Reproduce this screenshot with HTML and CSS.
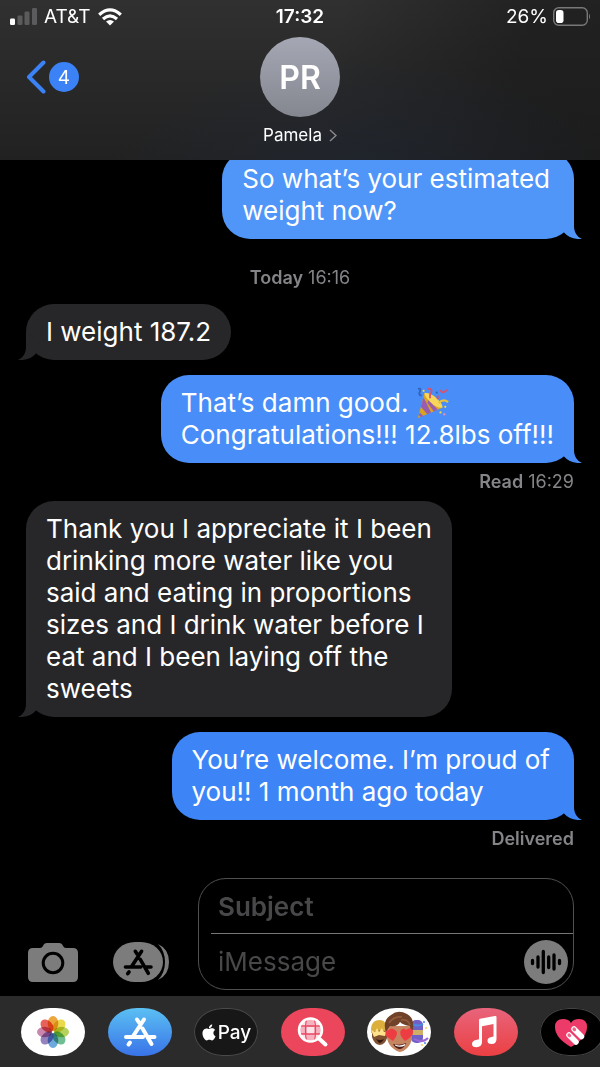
FILE: index.html
```html
<!DOCTYPE html>
<html lang="en">
<head>
<meta charset="utf-8">
<meta name="viewport" content="width=device-width, initial-scale=1">
<title>Pamela</title>
<link rel="stylesheet" href="styles.css">
</head>
<body>
<svg class="defs" aria-hidden="true">
  <symbol id="tail" viewBox="0 0 30 30"><path fill="currentColor" d="M22 2V17C22 23 25 28 30 30C22 30.6 16 28 12 23.5L10 10Z"/></symbol>
  <symbol id="store" viewBox="0 0 64 48"><path d="M36 11.500L24.500 29M29 11.500L31 14.500M34.500 20.500L43.500 36M18 29H35M41.500 29H46.500M22 34.500L20.500 36.500" fill="none" stroke="currentColor" stroke-width="4" stroke-linecap="round"/></symbol>
</svg>

<header class="header">
  <div class="status">
    <div class="status-left">
      <svg width="27" height="17" viewBox="0 0 27 17" aria-hidden="true"><rect x="0" y="10.500" width="5" height="6.500" rx="1.300" fill="#fff"/><g fill="#5b5b5d"><rect x="7.500" y="7.500" width="5" height="9.500" rx="1.300"/><rect x="14.500" y="3.500" width="5" height="13.500" rx="1.300"/><rect x="22" y="0" width="5" height="17" rx="1.300"/></g></svg>
      <span>AT&amp;T</span>
      <svg width="24" height="18" viewBox="0 0 24 18" fill="none" stroke="#fff" stroke-width="3.200" aria-hidden="true"><path d="M1.200 6.800Q12 -3 22.800 6.800M5 11Q12 4.700 19 11"/><path d="M12 17.500L8 13.500Q12 10.300 16 13.500Z" fill="#fff" stroke="none"/></svg>
    </div>
    <time class="clock">17:32</time>
    <div class="status-right">
      <span>26%</span>
      <svg width="38" height="19" viewBox="0 0 38 19" aria-hidden="true"><rect x=".7" y=".7" width="33.600" height="17.600" rx="5" fill="none" stroke="#78787a" stroke-width="1.400"/><rect x="3" y="3" width="7.500" height="13" rx="2.800" fill="#fff"/><path d="M36 6.500Q38 9.500 36 12.500Z" fill="#78787a"/></svg>
    </div>
  </div>
  <div class="nav">
    <button class="back" type="button" aria-label="Back, 4 unread">
      <svg width="20" height="34" viewBox="0 0 20 34" aria-hidden="true"><path d="M17.500 2.500L3 17L17.500 31.500" fill="none" stroke="#3b82f6" stroke-width="4" stroke-linecap="round" stroke-linejoin="round"/></svg>
      <span class="badge">4</span>
    </button>
    <button class="contact" type="button">
      <span class="avatar">PR</span>
      <span class="name">Pamela
        <svg width="8" height="13" viewBox="0 0 8 13" aria-hidden="true"><path d="M1 1L7 6.500L1 12" fill="none" stroke="#8a8a8e" stroke-width="1.500"/></svg>
      </span>
    </button>
  </div>
</header>

<main class="thread">
  <p class="bubble sent sent-high">So what’s your estimated<br>weight now?<svg class="bubble-tail"><use href="#tail"/></svg></p>
  <p class="day"><b>Today</b> 16:16</p>
  <p class="bubble received">I weight 187.2<svg class="bubble-tail"><use href="#tail"/></svg></p>
  <p class="bubble sent sent-mid">That’s damn good.
    <svg class="popper" viewBox="0 0 34 34" role="img" aria-label="Party popper"><path d="M8 6L27 22L1 33Z" fill="#d9a521"/><path d="M8 6Q16 6 22 13Q28 19 27 22Q21 23 14 16Q8 10 8 6Z" fill="#f6d65c"/><path d="M7 11L15 27L11 29L4 21ZM12 14L22 24L18 26L11 17ZM3 27L7 31L4 32L2 30Z" fill="#9a5cae"/><path d="M11 2Q17 1 15 6Q13 9 14 12M25 3Q26 7 29 5T33 3M22 9V13" fill="none" stroke="#dd506c" stroke-width="2"/><path d="M1 2Q5 1 3 5T5 9" fill="none" stroke="#3162be" stroke-width="2"/><path d="M23 17Q28 12 33 16" fill="none" stroke="#eac23b" stroke-width="2.500"/><g fill="#f1d83e"><circle cx="7" cy="4" r="1.200"/><circle cx="30" cy="21" r="1.200"/><circle cx="25" cy="27" r="1.200"/></g><circle cx="29" cy="29" r="1.300" fill="#dc8bb9"/><circle cx="21" cy="6" r="1.200" fill="#2f65bd"/></svg>
    <br>Congratulations!!! 12.8lbs off!!!<svg class="bubble-tail"><use href="#tail"/></svg></p>
  <p class="receipt"><b>Read</b> 16:29</p>
  <p class="bubble received">Thank you I appreciate it I been<br>drinking more water like you<br>said and eating in proportions<br>sizes and I drink water before I<br>eat and I been laying off the<br>sweets<svg class="bubble-tail"><use href="#tail"/></svg></p>
  <p class="bubble sent sent-low">You’re welcome. I’m proud of<br>you!! 1 month ago today<svg class="bubble-tail"><use href="#tail"/></svg></p>
  <p class="receipt"><b>Delivered</b></p>
</main>

<form class="composer">
  <div class="tools">
    <button type="button" aria-label="Camera"><svg width="50" height="39" viewBox="0 0 50 39"><path fill="#7c7c7c" d="M5 5H12Q14 5 15 3Q16 0 19 0H31Q34 0 35 3Q36 5 38 5H45Q50 5 50 10V34Q50 39 45 39H5Q0 39 0 34V10Q0 5 5 5Z"/><circle cx="25" cy="20" r="9.800" fill="none" stroke="#000" stroke-width="3"/></svg></button>
    <button type="button" aria-label="Apps"><svg width="56" height="40" viewBox="0 0 56 40"><rect width="50" height="40" rx="22" ry="20" fill="#7c7c7c"/><path d="M45 2Q56 7 56 20T45 38Q52 31 52 20T45 2Z" fill="#7c7c7c"/><use href="#store" x="-4" y="-1" width="58" height="43" color="#000"/></svg></button>
  </div>
  <div class="field">
    <input class="subject" type="text" placeholder="Subject" aria-label="Subject">
    <div class="message-row">
      <input type="text" placeholder="iMessage" aria-label="iMessage">
      <button class="audio" type="button" aria-label="Record audio"><svg width="44" height="44" viewBox="0 0 44 44"><circle cx="22" cy="22" r="22" fill="#7c7c7c"/><path d="M8.500 20.500V23.500M14 17V27M19.300 11.500V32.500M24.700 17V27.500M30 15V29M35.500 20.500V23.500" stroke="#000" stroke-width="3.300" stroke-linecap="round"/></svg></button>
    </div>
  </div>
</form>

<nav class="apps" aria-label="iMessage apps">
  <button class="app photos" type="button" aria-label="Photos"><svg viewBox="0 0 64 48"><g class="petals"><ellipse cx="32" cy="15.500" rx="5.300" ry="7.500" fill="#eda63c"/><ellipse cx="32" cy="15.500" rx="5.300" ry="7.500" fill="#ead94c" transform="rotate(45 32 24)"/><ellipse cx="32" cy="15.500" rx="5.300" ry="7.500" fill="#b5d25c" transform="rotate(90 32 24)"/><ellipse cx="32" cy="15.500" rx="5.300" ry="7.500" fill="#6fbd91" transform="rotate(135 32 24)"/><ellipse cx="32" cy="15.500" rx="5.300" ry="7.500" fill="#6ea9dd" transform="rotate(180 32 24)"/><ellipse cx="32" cy="15.500" rx="5.300" ry="7.500" fill="#9583bd" transform="rotate(225 32 24)"/><ellipse cx="32" cy="15.500" rx="5.300" ry="7.500" fill="#c987ae" transform="rotate(270 32 24)"/><ellipse cx="32" cy="15.500" rx="5.300" ry="7.500" fill="#e8625c" transform="rotate(315 32 24)"/></g></svg></button>
  <button class="app store" type="button" aria-label="App Store"><svg viewBox="0 0 64 48"><use href="#store"/></svg></button>
  <button class="app pay" type="button" aria-label="Apple Pay"><svg class="apple" viewBox="0 0 24 24"><path fill="#fff" d="M12.152 6.896c-.948 0-2.415-1.078-3.960-1.040-2.040.027-3.910 1.183-4.961 3.014-2.117 3.675-.546 9.103 1.519 12.090 1.013 1.454 2.208 3.090 3.792 3.039 1.520-.065 2.090-.987 3.935-.987 1.831 0 2.350.987 3.960.948 1.637-.026 2.676-1.480 3.676-2.948 1.156-1.688 1.636-3.325 1.662-3.415-.039-.013-3.182-1.221-3.220-4.857-.026-3.040 2.480-4.494 2.597-4.559-1.429-2.090-3.623-2.324-4.390-2.376-2-.156-3.675 1.090-4.610 1.090zM15.530 3.830c.843-1.012 1.400-2.427 1.245-3.830-1.207.052-2.662.805-3.532 1.818-.780.896-1.454 2.338-1.273 3.714 1.338.104 2.715-.688 3.559-1.701"/></svg><span>Pay</span></button>
  <button class="app search" type="button" aria-label="Images"><svg viewBox="0 0 64 48"><circle cx="29.500" cy="22" r="11" fill="#f5b3bf"/><path d="M26 19H33V26H26ZM20 14H26V19H20ZM33 14H39V19H33ZM20 26H26V31H20ZM33 26H39V31H33Z" fill="#fbe3e7"/><path d="M25.500 11Q23.500 22 25.500 33M33.500 11Q35.500 22 33.500 33M19 18H40M19 26H40" stroke="#ec4660" stroke-width="1.300" fill="none"/><circle cx="29.500" cy="22" r="11.500" fill="none" stroke="#fff" stroke-width="2.500"/><path d="M38.500 31L44.500 36.500" stroke="#fff" stroke-width="4" stroke-linecap="round"/></svg></button>
  <button class="app memoji" type="button" aria-label="Memoji"><svg viewBox="0 0 64 48">
    <path d="M5 22H20V30Q18 37 12.500 37Q7 36 5 29Z" fill="#7f5030"/><path d="M4 25Q3 12 13 12Q20 12 21 24Q13 20 4 25Z" fill="#dcae3c"/><path d="M4 22L8 24L10 20L12 24L15 20L17 24L20 23L18 28L12 27L7 29Z" fill="#ffe28a"/><path d="M9 31Q13 33 17 31Q15 35 12 35Z" fill="#35190f"/>
    <rect x="44" y="12" width="12" height="23" rx="5" fill="#7161c7"/><path d="M45 16Q51 19 56 16" stroke="#4b8ae0" stroke-width="2" fill="none"/><path d="M45 22H56V27H45Z" fill="#cfae68"/><path d="M47 31Q55 36 61 30" stroke="#9b6ad6" stroke-width="2" fill="none"/><g fill="#4586e8"><circle cx="57" cy="14" r="1"/><circle cx="58" cy="35" r="1"/></g><g fill="#f0d561"><circle cx="59" cy="20" r="1"/><circle cx="55" cy="37" r="1"/></g>
    <path d="M20 18H45V30Q44 37 39 41Q33 47 27 41Q21 37 20 30Z" fill="#c58560"/><path d="M19 25Q15 12 24 7Q31 1 40 6Q49 11 45 25Q43 22 43 18Q36 17 33 14Q31 19 23 18Q21 20 19 25Z" fill="#70422a"/><path d="M22 15Q27 8 35 9M34 12Q41 11 43 17" stroke="#935d3c" stroke-width="1.500" fill="none"/><path d="M26 33L19 28Q17 22 22 22Q24 19 28 22Q33 25 26 33Z" fill="#ee3d42"/><path d="M38 33Q31 26 34 22Q37 19 39 22Q44 18 46 23Q47 28 38 33Z" fill="#ee3d42"/><path d="M26 36Q33 38 39 35Q37 41 32 41Q28 40 26 36Z" fill="#4d1b17"/><path d="M28 36.500Q33 38.500 38 36V37.500Q33 40 28 37.500Z" fill="#fff"/></svg></button>
  <button class="app music" type="button" aria-label="Music"><svg viewBox="0 0 64 48"><path d="M25 12Q25 11 26 10.700L41 8Q42.500 7.700 42.500 9V31Q42.500 36 37.500 36Q33.500 36 33.500 32.800Q33.500 29.500 37.500 29L39.500 28.500V16L28 18.300V34Q28 39 22.500 39.300Q18 39.300 18 36Q18 32.800 22 32L25 31.300Z" fill="#fff"/></svg></button>
  <button class="app touch" type="button" aria-label="Digital Touch"><svg viewBox="0 0 64 48"><path d="M31 39Q15 30 15 19Q15 11 23 11Q29 11 31 15Q33 11 39 11Q47 11 47 19Q47 30 31 39Z" fill="#ec3b68"/><path d="M34 21L41.500 28.500M29 27L36 34" stroke="#fff" stroke-width="5.500" stroke-linecap="round"/><path d="M34 21L34.600 21.600M29 27L29.600 27.600" stroke="#ec6688" stroke-width="3.200" stroke-linecap="round"/></svg></button>
</nav>
</body>
</html>
```
FILE: styles.css
```css
* { box-sizing: border-box; }

body {
  margin: 0;
  height: 100vh;
  display: flex;
  flex-direction: column;
  overflow: hidden;
  background: #000;
  color: #fff;
  font-family: Inter, "Liberation Sans", sans-serif;
}

p { margin: 0; }

button, input {
  font: inherit;
  color: inherit;
  background: none;
  border: 0;
  padding: 0;
}

svg { display: block; }
.defs { position: absolute; width: 0; height: 0; }
b { font-weight: 600; }

/* Header */
.header {
  flex: none;
  padding: 4px 10px 12px;
  background:
    radial-gradient(ellipse at 60% 110%, rgba(32, 40, 54, .6), transparent 50%),
    linear-gradient(100deg, transparent 55%, rgba(24, 24, 24, .6) 85%),
    linear-gradient(#303030, #212121);
}

.status {
  display: grid;
  grid-template-columns: 1fr auto 1fr;
  align-items: center;
  height: 25px;
  font-size: 19px;
}
.status-left { display: flex; align-items: center; gap: 7px; }
.status-right { display: flex; align-items: center; justify-content: flex-end; gap: 5px; }
.status-right svg { margin-right: -1px; }
.clock { font-weight: 600; }

.nav {
  display: grid;
  grid-template-columns: 1fr auto 1fr;
  align-items: start;
  padding-top: 8px;
}
.back {
  justify-self: start;
  display: flex;
  align-items: center;
  gap: 3px;
  height: 80px;
  padding-left: 16px;
}
.badge {
  display: grid;
  place-items: center;
  width: 30px;
  height: 30px;
  border-radius: 50%;
  background: #3b82f6;
  font-size: 19px;
}
.contact {
  display: flex;
  flex-direction: column;
  align-items: center;
  gap: 5px;
}
.avatar {
  display: grid;
  place-items: center;
  width: 80px;
  height: 80px;
  border-radius: 50%;
  background: linear-gradient(#a5a8b4, #84878f);
  font-size: 32px;
  font-weight: 600;
}
.name {
  display: flex;
  align-items: center;
  gap: 7px;
  font-size: 17px;
  line-height: 26px;
}

/* Conversation, anchored to its newest message */
.thread {
  flex: 1;
  min-height: 0;
  overflow: hidden;
  display: flex;
  flex-direction: column;
  justify-content: flex-end;
  padding: 0 26px 14px;
}
.thread p { flex: none; }

.bubble {
  position: relative;
  padding: 12px 20px;
  border-radius: 28px;
  font-size: 26px;
  line-height: 32px;
}
.sent { align-self: flex-end; background: var(--tint); }
.sent-high { --tint: #5095f8; padding-right: 24px; }
.sent-mid { --tint: #498ef8; }
.sent-low { --tint: #3d85f7; padding-right: 24px; }
.received {
  --tint: #27272a;
  align-self: flex-start;
  background: var(--tint);
  margin-bottom: 15px;
}

.bubble-tail {
  position: absolute;
  right: -8px;
  bottom: 0;
  width: 30px;
  height: 30px;
  color: var(--tint);
}
.received .bubble-tail { right: auto; left: -8px; transform: scaleX(-1); }

.popper {
  display: inline-block;
  width: 34px;
  height: 32px;
  vertical-align: middle;
  margin-top: -8px;
  margin-bottom: -4px;
}

.day, .receipt { font-size: 18px; color: #858589; }
.day { text-align: center; padding-top: 12px; line-height: 53px; }
.receipt { text-align: right; line-height: 38px; }

/* Composer */
.composer {
  flex: none;
  display: flex;
  align-items: flex-end;
  gap: 29px;
  padding: 6px 26px 6px 28px;
}
.tools { display: flex; align-items: center; gap: 35px; padding-bottom: 8px; }
.field {
  flex: 1;
  min-width: 0;
  border: 1px solid #505053;
  border-radius: 28px;
}
.field input {
  display: block;
  width: 100%;
  min-width: 0;
  height: 54px;
  font-size: 26px;
  outline: 0;
}
.field input::placeholder { color: #48484a; opacity: 1; }
.field .subject { padding-left: 19px; font-weight: 600; }
.message-row {
  display: flex;
  align-items: center;
  margin-left: 12px;
  padding: 0 5px 0 7px;
  border-top: 1px solid #77777a;
}
.message-row input { height: 55px; }
.audio { flex: none; }

/* App strip */
.apps {
  flex: none;
  display: flex;
  justify-content: space-between;
  padding: 12px 0 11px 21px;
  margin-right: -4px;
  background: #2b2b2b;
}
.app {
  flex: none;
  display: flex;
  align-items: center;
  justify-content: center;
  width: 64px;
  height: 48px;
  border-radius: 29px / 24px;
  overflow: hidden;
}
.app > svg { width: 64px; height: 48px; flex: none; }
.photos, .memoji { background: #fff; }
.petals { isolation: isolate; }
.petals ellipse { mix-blend-mode: multiply; }
.store { background: linear-gradient(#5bc0f3, #3973e8); }
.pay { background: #171717; box-shadow: inset 0 0 0 1px #4a4a4a; font-size: 19px; font-weight: 500; gap: 1px; }
.app > .apple { width: 16px; height: 17px; }
.search { background: #ec465c; }
.music { background: linear-gradient(#e8647b, #eb4043); }
.touch { background: #000; box-shadow: inset 0 0 0 1px #444; }
```
